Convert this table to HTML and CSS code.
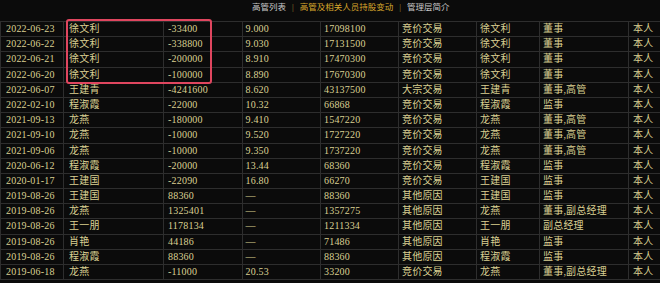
FILE: index.html
```html
<!DOCTYPE html>
<html lang="zh-CN">
<head>
<meta charset="utf-8">
<title>高管及相关人员持股变动</title>
<link rel="stylesheet" href="styles.css">
</head>
<body>
<div class="page">
  <nav class="tabs">
    <span class="tab">高管列表</span>
    <span class="sep">|</span>
    <span class="tab active">高管及相关人员持股变动</span>
    <span class="sep">|</span>
    <span class="tab">管理层简介</span>
  </nav>
  <div class="table">
    <div class="highlight"></div>
    <div class="row"><span class="c date">2022-06-23</span><span class="c name">徐文利</span><span class="c">-33400</span><span class="c">9.000</span><span class="c">17098100</span><span class="c">竞价交易</span><span class="c">徐文利</span><span class="c">董事</span><span class="c">本人</span></div>
    <div class="row"><span class="c date">2022-06-22</span><span class="c name">徐文利</span><span class="c">-338800</span><span class="c">9.030</span><span class="c">17131500</span><span class="c">竞价交易</span><span class="c">徐文利</span><span class="c">董事</span><span class="c">本人</span></div>
    <div class="row"><span class="c date">2022-06-21</span><span class="c name">徐文利</span><span class="c">-200000</span><span class="c">8.910</span><span class="c">17470300</span><span class="c">竞价交易</span><span class="c">徐文利</span><span class="c">董事</span><span class="c">本人</span></div>
    <div class="row"><span class="c date">2022-06-20</span><span class="c name">徐文利</span><span class="c">-100000</span><span class="c">8.890</span><span class="c">17670300</span><span class="c">竞价交易</span><span class="c">徐文利</span><span class="c">董事</span><span class="c">本人</span></div>
    <div class="row"><span class="c date">2022-06-07</span><span class="c name">王建青</span><span class="c">-4241600</span><span class="c">8.620</span><span class="c">43137500</span><span class="c">大宗交易</span><span class="c">王建青</span><span class="c">董事,高管</span><span class="c">本人</span></div>
    <div class="row"><span class="c date">2022-02-10</span><span class="c name">程淑霞</span><span class="c">-22000</span><span class="c">10.32</span><span class="c">66868</span><span class="c">竞价交易</span><span class="c">程淑霞</span><span class="c">监事</span><span class="c">本人</span></div>
    <div class="row"><span class="c date">2021-09-13</span><span class="c name">龙燕</span><span class="c">-180000</span><span class="c">9.410</span><span class="c">1547220</span><span class="c">竞价交易</span><span class="c">龙燕</span><span class="c">董事,高管</span><span class="c">本人</span></div>
    <div class="row"><span class="c date">2021-09-10</span><span class="c name">龙燕</span><span class="c">-10000</span><span class="c">9.520</span><span class="c">1727220</span><span class="c">竞价交易</span><span class="c">龙燕</span><span class="c">董事,高管</span><span class="c">本人</span></div>
    <div class="row"><span class="c date">2021-09-06</span><span class="c name">龙燕</span><span class="c">-10000</span><span class="c">9.350</span><span class="c">1737220</span><span class="c">竞价交易</span><span class="c">龙燕</span><span class="c">董事,高管</span><span class="c">本人</span></div>
    <div class="row"><span class="c date">2020-06-12</span><span class="c name">程淑霞</span><span class="c">-20000</span><span class="c">13.44</span><span class="c">68360</span><span class="c">竞价交易</span><span class="c">程淑霞</span><span class="c">监事</span><span class="c">本人</span></div>
    <div class="row"><span class="c date">2020-01-17</span><span class="c name">王建国</span><span class="c">-22090</span><span class="c">16.80</span><span class="c">66270</span><span class="c">竞价交易</span><span class="c">王建国</span><span class="c">监事</span><span class="c">本人</span></div>
    <div class="row"><span class="c date">2019-08-26</span><span class="c name">王建国</span><span class="c">88360</span><span class="c">—</span><span class="c">88360</span><span class="c">其他原因</span><span class="c">王建国</span><span class="c">监事</span><span class="c">本人</span></div>
    <div class="row"><span class="c date">2019-08-26</span><span class="c name">龙燕</span><span class="c">1325401</span><span class="c">—</span><span class="c">1357275</span><span class="c">其他原因</span><span class="c">龙燕</span><span class="c">董事,副总经理</span><span class="c">本人</span></div>
    <div class="row"><span class="c date">2019-08-26</span><span class="c name">王一朋</span><span class="c">1178134</span><span class="c">—</span><span class="c">1211334</span><span class="c">其他原因</span><span class="c">王一朋</span><span class="c">副总经理</span><span class="c">本人</span></div>
    <div class="row"><span class="c date">2019-08-26</span><span class="c name">肖艳</span><span class="c">44186</span><span class="c">—</span><span class="c">71486</span><span class="c">其他原因</span><span class="c">肖艳</span><span class="c">监事</span><span class="c">本人</span></div>
    <div class="row"><span class="c date">2019-08-26</span><span class="c name">程淑霞</span><span class="c">88360</span><span class="c">—</span><span class="c">88360</span><span class="c">其他原因</span><span class="c">程淑霞</span><span class="c">监事</span><span class="c">本人</span></div>
    <div class="row"><span class="c date">2019-06-18</span><span class="c name">龙燕</span><span class="c">-11000</span><span class="c">20.53</span><span class="c">33200</span><span class="c">竞价交易</span><span class="c">龙燕</span><span class="c">董事,副总经理</span><span class="c">本人</span></div>
  </div>
</div>
</body>
</html>
```
FILE: styles.css
```css
html, body {
  margin: 0;
  padding: 0;
  background: #0b0b0b;
}
.page {
  width: 660px;
  height: 283px;
  overflow: hidden;
  background: #0b0b0b;
  font-family: "Liberation Serif", "Noto Sans CJK SC", serif;
  color: #dad092;
}
.tabs {
  height: 21px;
  display: flex;
  align-items: flex-start;
  padding-left: 252px;
  gap: 6px;
  font-size: 8.5px;
  line-height: 15px;
  box-sizing: border-box;
}
.tab { color: #c9c9c9; }
.tab.active { color: #d9a72c; }
.sep { color: #a88a2e; }
.table {
  position: relative;
  border-top: 1px solid #2e2e2e;
}
.row {
  display: grid;
  grid-template-columns: 63px 100px 78.5px 78.5px 78px 78px 63px 89px 1fr;
  height: 15.2px;
  border-bottom: 1px solid #2e2e2e;
  box-sizing: border-box;
  font-size: 10px;
  line-height: 14px;
  letter-spacing: 0.2px;
}
.c {
  padding-left: 3px;
  border-left: 1px solid #2e2e2e;
  white-space: nowrap;
  overflow: hidden;
}
.c.date { padding-left: 5px; }
.c.name { padding-left: 5px; }
.c:nth-child(3) { padding-left: 4px; }
.c:nth-child(9) { padding-left: 4px; }
.highlight {
  position: absolute;
  left: 66px;
  top: -3px;
  width: 146px;
  height: 65px;
  box-sizing: border-box;
  border: 2px solid #e0465f;
  border-radius: 3px;
  pointer-events: none;
}
```
